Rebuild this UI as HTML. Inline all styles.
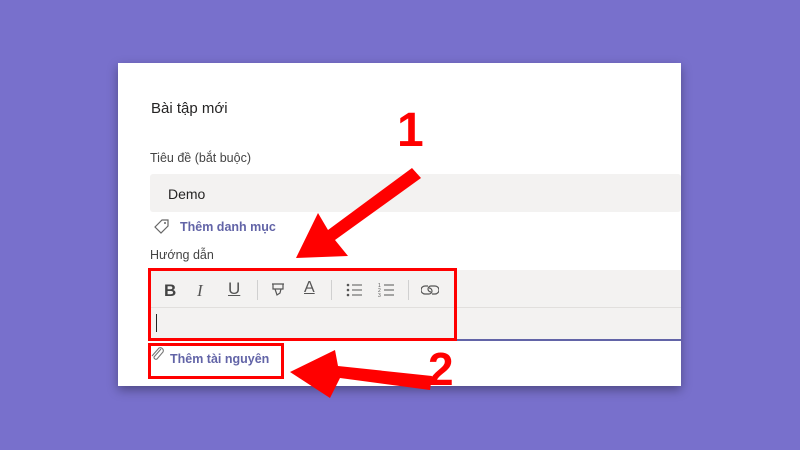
<!DOCTYPE html>
<html><head><meta charset="utf-8"><style>
body{margin:0;width:800px;height:450px;background:#7870cc;position:relative;overflow:hidden;font-family:"Liberation Sans","DejaVu Sans",sans-serif}
.card{position:absolute;left:118px;top:63px;width:563px;height:323px;background:#fff;box-shadow:0 4px 10px rgba(0,0,0,.35)}
.t{position:absolute;color:#252424}
.in{position:absolute;background:#f3f2f1}
.ic{position:absolute;color:#555;font-size:17px}
.sep{position:absolute;top:280px;width:1px;height:20px;background:#d0d0d0}
</style></head><body>
<div class="card"></div>
<div class="t" style="left:151px;top:100px;font-size:15px">Bài tập mới</div>
<div class="t" style="left:150px;top:151px;font-size:12.5px;color:#444">Tiêu đề (bắt buộc)</div>
<div class="in" style="left:150px;top:174px;width:531px;height:38px;border-radius:3px"></div>
<div class="t" style="left:168px;top:186px;font-size:14px">Demo</div>
<svg style="position:absolute;left:153px;top:218px" width="18" height="18" viewBox="0 0 18 18"><path d="M2 9 L9 2 H15 V8 L8 15 Z" fill="none" stroke="#666" stroke-width="1.2"/><circle cx="12" cy="5" r="1" fill="#666"/></svg>
<div class="t" style="left:180px;top:220px;font-size:12.5px;color:#6264a7;font-weight:bold">Thêm danh mục</div>
<div class="t" style="left:150px;top:248px;font-size:12.5px;color:#444">Hướng dẫn</div>
<div class="in" style="left:150px;top:270px;width:531px;height:70px"></div>
<div style="position:absolute;left:150px;top:307px;width:531px;height:1px;background:#e1dfdd"></div>
<div style="position:absolute;left:150px;top:339px;width:531px;height:2px;background:#6264a7"></div>
<div class="ic" style="left:164px;top:281px;font-weight:bold;color:#444">B</div>
<div class="ic" style="left:197px;top:281px;font-style:italic;font-family:'Liberation Serif'">I</div>
<div class="ic" style="left:228px;top:279px;text-decoration:underline">U</div>
<div class="sep" style="left:257px"></div>
<svg style="position:absolute;left:270px;top:282px" width="16" height="16" viewBox="0 0 16 16"><path d="M2 2 H14 M3 2 V7 H13 V2 M5 7 L7 13 L10 11 L11 7" fill="none" stroke="#555" stroke-width="1.2"/></svg>
<div class="ic" style="left:304px;top:279px;text-decoration:underline;font-size:16px">A</div>
<div class="sep" style="left:331px"></div>
<svg style="position:absolute;left:345px;top:282px" width="18" height="16" viewBox="0 0 18 16"><g fill="#555"><circle cx="3" cy="3" r="1.3"/><circle cx="3" cy="8" r="1.3"/><circle cx="3" cy="13" r="1.3"/><rect x="7" y="2.5" width="10" height="1"/><rect x="7" y="7.5" width="10" height="1"/><rect x="7" y="12.5" width="10" height="1"/></g></svg>
<svg style="position:absolute;left:377px;top:282px" width="18" height="16" viewBox="0 0 18 16"><g fill="#555" font-size="5"><text x="1" y="5">1</text><text x="1" y="10">2</text><text x="1" y="15">3</text><rect x="7" y="2.5" width="10" height="1"/><rect x="7" y="7.5" width="10" height="1"/><rect x="7" y="12.5" width="10" height="1"/></g></svg>
<div class="sep" style="left:408px"></div>
<svg style="position:absolute;left:421px;top:282px" width="18" height="16" viewBox="0 0 18 16"><path d="M7 4 H4 A4 4 0 0 0 4 12 H8 A3 3 0 0 0 8 6 M11 12 H14 A4 4 0 0 0 14 4 H10 A3 3 0 0 0 10 10" fill="none" stroke="#555" stroke-width="1.2"/></svg>
<div style="position:absolute;left:156px;top:314px;width:1px;height:18px;background:#222"></div>
<svg style="position:absolute;left:150px;top:346px" width="16" height="18" viewBox="0 0 16 18"><path d="M11 3 L4 11 A2 2 0 0 0 7 13 L13 6 A3 3 0 0 0 9 2 L2 10" fill="none" stroke="#777" stroke-width="1.1"/></svg>
<div class="t" style="left:170px;top:352px;font-size:12.5px;color:#6264a7;font-weight:bold">Thêm tài nguyên</div>
<div style="position:absolute;left:148px;top:268px;width:303px;height:67px;border:3px solid #f00"></div>
<div style="position:absolute;left:148px;top:343px;width:130px;height:30px;border:3px solid #f00"></div>
<svg style="position:absolute;left:0;top:0" width="800" height="450">
<g fill="#f00"><path d="M412 168 L421 178 L335 240 L348 256 L296 258 L318 213 L328 230 Z"/>
<path d="M432 376 L430 390 L340 378 L330 398 L290 372 L335 350 L338 366 Z"/></g>
<text x="397" y="146" font-family="Liberation Sans" font-weight="bold" font-size="48" fill="#f00">1</text>
<text x="428" y="385" font-family="Liberation Sans" font-weight="bold" font-size="46" fill="#f00">2</text>
</svg>
</body></html>
